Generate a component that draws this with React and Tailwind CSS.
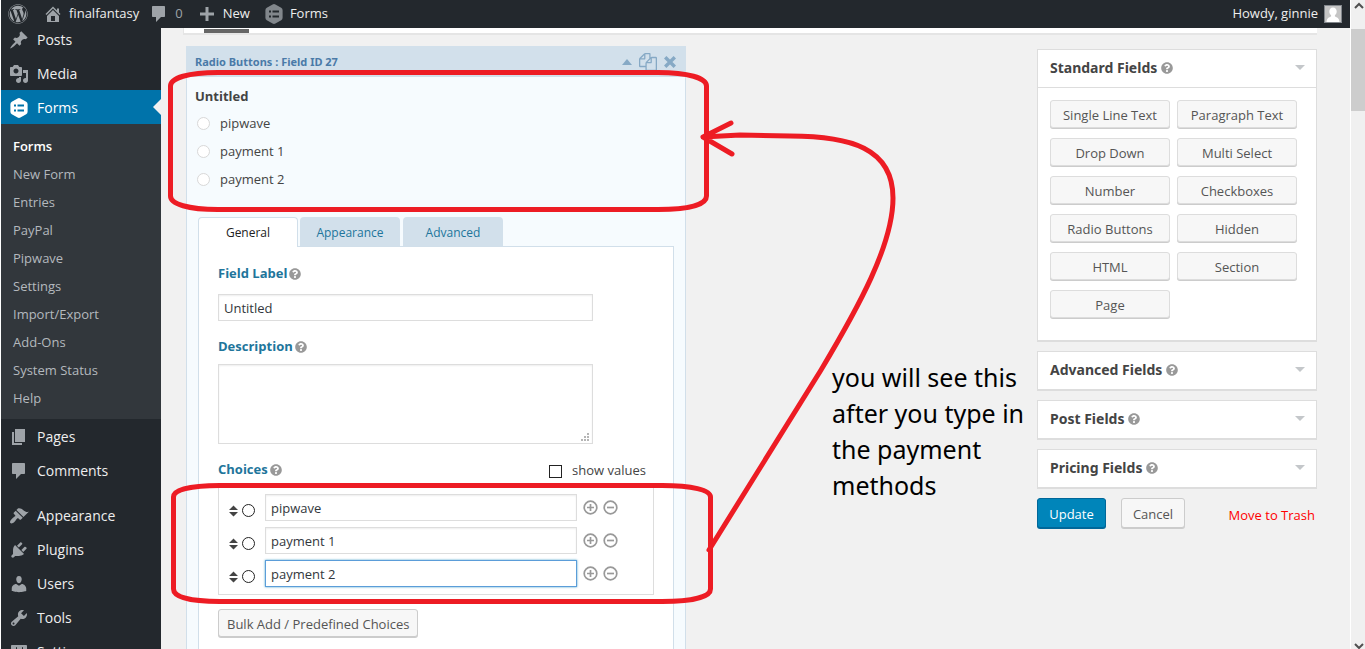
import { FaWordpress, FaQuestionCircle } from "react-icons/fa";

const PATHS = {
  post: "M10.44 3.02l1.82-1.82 6.36 6.35-1.83 1.82c-1.05-.68-2.48-.57-3.41.36l-.75.75c-.92.93-1.04 2.35-.35 3.41l-1.83 1.82-2.41-2.41-2.8 2.79c-.42.42-3.38 2.71-3.8 2.29s1.86-3.39 2.28-3.81l2.79-2.79L4.1 9.36l1.83-1.82c1.05.69 2.48.57 3.4-.36l.75-.75c.93-.92 1.05-2.35.36-3.41z",
  media: "M13 11V4c0-.55-.45-1-1-1h-1.67L9 1H5L3.67 3H2c-.55 0-1 .45-1 1v7c0 .55.45 1 1 1h10c.55 0 1-.45 1-1zM7 4.5c1.38 0 2.5 1.12 2.5 2.5S8.38 9.5 7 9.5 4.5 8.38 4.5 7 5.62 4.5 7 4.5zM14 6h5v10.5c0 1.38-1.12 2.5-2.5 2.5S14 17.88 14 16.5s1.12-2.5 2.5-2.5c.17 0 .34.02.5.05V9h-3V6zm-4 8.05V13h2v3.5c0 1.38-1.12 2.5-2.5 2.5S7 17.88 7 16.5 8.12 14 9.5 14c.17 0 .34.02.5.05z",
  page: "M6 15V2h10v13H6zm-1 1h8v2H3V5h2v11z",
  comments: "M4 2h11c.6 0 1 .4 1 1v9c0 .6-.4 1-1 1h-3l-5 5v-5H4c-.6 0-1-.4-1-1V3c0-.6.4-1 1-1z",
  appearance: "M14.48 11.06L7.41 3.99l1.5-1.5c.5-.56 2.3-.47 3.51.32 1.21.8 1.43 1.28 2.91 2.1 1.18.64 2.45 1.26 4.45.85zm-.71.71L6.7 4.7 4.93 6.47c-.39.39-.39 1.02 0 1.41l1.06 1.06c.39.39.39 1.03 0 1.42-.6.6-1.43 1.11-2.21 1.69-.35.26-.7.53-1.01.84C1.43 14.23.4 16.08 1.4 17.07c.99 1 2.84-.03 4.18-1.36.31-.31.58-.66.85-1.02.57-.78 1.08-1.61 1.69-2.21.39-.39 1.02-.39 1.41 0l1.06 1.06c.39.39 1.02.39 1.41 0z",
  plugins: "M13.11 4.36L9.87 7.6 8 5.73l3.24-3.24c.35-.34 1.05-.2 1.56.32.52.51.66 1.21.31 1.55zm-8 1.77l.91-1.12 9.01 9.01-1.19.84c-.71.71-2.63 1.16-3.82 1.16H6.14L4.9 17.26c-.59.59-1.54.59-2.12 0-.59-.58-.59-1.53 0-2.12l1.24-1.24v-3.88c0-1.13.4-3.19 1.09-3.89zm7.26 3.97l3.24-3.24c.34-.35 1.04-.21 1.55.31.52.51.66 1.21.31 1.55l-3.24 3.25z",
  users: "M10 9.25c-2.27 0-2.73-3.44-2.73-3.44C7 4.02 7.82 2 9.97 2c2.16 0 2.98 2.02 2.71 3.81 0 0-.41 3.44-2.68 3.44zm0 2.57L12.72 10c2.39 0 4.52 2.33 4.52 4.53v2.49s-3.65 1.13-7.24 1.13c-3.65 0-7.24-1.13-7.24-1.13v-2.49c0-2.25 1.94-4.48 4.47-4.48z",
  tools: "M16.68 9.77c-1.34 1.34-3.3 1.67-4.95.99l-5.41 6.52c-.99.99-2.59.99-3.58 0s-.99-2.59 0-3.57l6.52-5.42c-.68-1.65-.35-3.61.99-4.95 1.28-1.28 3.12-1.62 4.72-1.06l-2.89 2.89 2.82 2.82 2.86-2.87c.53 1.58.18 3.39-1.08 4.65zM3.81 16.21c.4.39 1.04.39 1.43 0 .4-.4.4-1.04 0-1.43-.39-.4-1.03-.4-1.43 0-.39.39-.39 1.03 0 1.43z",
  settings: "M18 16V4c0-.55-.45-1-1-1H3c-.55 0-1 .45-1 1v12c0 .55.45 1 1 1h14c.55 0 1-.45 1-1zM8 11h1c.55 0 1 .45 1 1s-.45 1-1 1H8v1.5c0 .28-.22.5-.5.5s-.5-.22-.5-.5V13H6c-.55 0-1-.45-1-1s.45-1 1-1h1V5.5c0-.28.22-.5.5-.5s.5.22.5.5V11zm5-2h-1c-.55 0-1-.45-1-1s.45-1 1-1h1V5.5c0-.28.22-.5.5-.5s.5.22.5.5V7h1c.55 0 1 .45 1 1s-.45 1-1 1h-1v5.5c0 .28-.22.5-.5.5s-.5-.22-.5-.5V9z",
  home: "M16 8.5l1.53 1.53-1.06 1.06L10 4.6l-6.47 6.49-1.06-1.06L10 2.5l4 4v-2h2v4zm-6-2.46l6 5.99V18H4v-5.97zM12 17v-5H8v5h4z",
  plus: "M8.5 3h3v5.5H17v3h-5.5V17h-3v-5.5H3v-3h5.5z",
  forms: "M8.6.5q1.4-.8 2.8 0l5.8 3.3q1.4.8 1.4 2.4v7.6q0 1.6-1.4 2.4l-5.8 3.3q-1.4.8-2.8 0l-5.8-3.3q-1.4-.8-1.4-2.4V6.2q0-1.6 1.4-2.4zM5 6.5v2h2v-2zm3.5 0v2H15v-2zM5 11.5v2h2v-2zm3.5 0v2H15v-2z",
};

function Icon({ name, className = "" }) {
  return (
    <svg viewBox="0 0 20 20" className={`size-5 shrink-0 fill-current ${className}`} aria-hidden="true">
      <path fillRule="evenodd" d={PATHS[name]} />
    </svg>
  );
}

function Help() {
  return <FaQuestionCircle className="size-3 shrink-0 text-[#999]" aria-hidden="true" />;
}

function MenuItem({ icon, label, current }) {
  return (
    <li className={`relative ${current ? "bg-[#0073aa] text-white" : "text-[#eee]"}`}>
      <a href="#" className="flex h-[34px] items-center gap-2 pt-0.5 pl-2 text-sm">
        <Icon name={icon} className={current ? "text-white" : "text-[#9ea3a8]"} />
        {label}
      </a>
      {current && (
        <span className="absolute top-[9px] right-0 border-8 border-transparent border-r-[#f1f1f1]" />
      )}
    </li>
  );
}

const SUBMENU = ["New Form", "Entries", "PayPal", "Pipwave", "Settings", "Import/Export", "Add-Ons", "System Status", "Help"];

function Sidebar() {
  return (
    <nav className="w-40 shrink-0 overflow-hidden bg-[#23282d]" aria-label="Admin menu">
      <ul className="-mt-1.5">
        <MenuItem icon="post" label="Posts" />
        <MenuItem icon="media" label="Media" />
        <MenuItem icon="forms" label="Forms" current />
        <li>
          <ul className="bg-[#32373c] pt-2 pb-[7px] text-[13px] leading-7 text-[#b4b9be]">
            <li><a href="#" className="block pl-3 font-semibold text-white">Forms</a></li>
            {SUBMENU.map((s) => (
              <li key={s}><a href="#" className="block pl-3">{s}</a></li>
            ))}
          </ul>
        </li>
        <MenuItem icon="page" label="Pages" />
        <MenuItem icon="comments" label="Comments" />
        <li className="h-[11px]" aria-hidden="true" />
        <MenuItem icon="appearance" label="Appearance" />
        <MenuItem icon="plugins" label="Plugins" />
        <MenuItem icon="users" label="Users" />
        <MenuItem icon="tools" label="Tools" />
        <MenuItem icon="settings" label="Settings" />
      </ul>
    </nav>
  );
}

function AdminBar() {
  return (
    <header className="flex h-7 shrink-0 items-center bg-[#23282d] pr-2 pl-[7px] text-[13px] text-[#eee]">
      <a href="#" aria-label="WordPress" className="mr-[15px]"><FaWordpress className="size-5 text-[#9ea3a8]" /></a>
      <a href="#" className="mr-2.5 flex items-center gap-1.5">
        <Icon name="home" className="text-[#9ea3a8]" />finalfantasy
      </a>
      <a href="#" className="mr-3.5 flex items-center gap-1.5 text-[#9ea3a8]"><Icon name="comments" />0</a>
      <a href="#" className="mr-3.5 flex items-center gap-1.5">
        <Icon name="plus" className="text-[#9ea3a8]" />New
      </a>
      <a href="#" className="flex items-center gap-1.5"><Icon name="forms" className="text-[#82878c]" />Forms</a>
      <a href="#" className="ml-auto flex items-center gap-1.5">
        Howdy, ginnie
        <svg viewBox="0 0 18 18" className="size-[18px]" aria-hidden="true">
          <rect width="18" height="18" fill="#82878c" />
          <rect x="1" y="1" width="16" height="16" fill="#c5c5c5" />
          <path fill="#fff" d="M9 2.5c2.4 0 3.7 1.8 3.7 4 0 1.6-.8 3-1.8 3.7v1.3c2 .8 4.3 1.5 4.6 5.5h-13c.3-4 2.6-4.7 4.6-5.5v-1.3c-1-.7-1.8-2.1-1.8-3.7 0-2.2 1.3-4 3.7-4z" />
        </svg>
      </a>
    </header>
  );
}

const FIELD = "border bg-white px-[5px] text-[13px] text-[#32373c] outline-none";
const FIELD_IDLE = "border-[#ddd] shadow-[inset_0_1px_2px_rgba(0,0,0,0.07)]";
const FIELD_FOCUS = "border-[#5b9dd9] shadow-[0_0_2px_rgba(30,140,190,0.8)]";
const BUTTON = "rounded-[3px] border border-[#ccc] bg-[#f7f7f7] text-[13px] text-[#555] shadow-[0_1px_0_#ccc]";

function FieldPreview() {
  return (
    <div role="radiogroup" aria-labelledby="preview-title" className="h-[140px] px-2 pt-[9px]">
      <p id="preview-title" className="text-[13px] leading-5 font-bold text-[#444]">Untitled</p>
      <div className="pt-1">
        {["pipwave", "payment 1", "payment 2"].map((o) => (
          <label key={o} className="flex h-7 items-center gap-2.5 pl-0.5 text-[13px] text-[#444]">
            <input type="radio" name="preview" className="mb-0.5 size-[13px] appearance-none rounded-full border border-[#d8d8d8] bg-white" />
            {o}
          </label>
        ))}
      </div>
    </div>
  );
}

function Choice({ value, focused }) {
  return (
    <li className="flex h-[27px] items-center">
      <svg viewBox="0 0 9 12" className="mt-1.5 h-3 w-[9px] fill-[#444]" aria-hidden="true">
        <path d="M4.5 0.5L9 5H0zM0 7h9l-4.5 4.5z" />
      </svg>
      <input type="radio" name="default-choice" aria-label={`Default ${value}`} className="mt-1.5 ml-1 size-[13px] appearance-none rounded-full border border-[#222] bg-white" />
      <input
        type="text"
        aria-label="Choice label"
        defaultValue={value}
        className={`${FIELD} ml-2.5 h-[27px] w-[312px] ${focused ? FIELD_FOCUS : FIELD_IDLE}`}
      />
      <div className="ml-1.5 flex gap-[5px]">
        {[["Add choice", "M7.5 4v7M4 7.5h7"], ["Remove choice", "M4 7.5h7"]].map(([label, d]) => (
          <button key={label} type="button" aria-label={label}>
            <svg viewBox="0 0 15 15" className="size-[15px] fill-none stroke-[#999]" strokeWidth="1.7">
              <circle cx="7.5" cy="7.5" r="6.3" />
              <path d={d} />
            </svg>
          </button>
        ))}
      </div>
    </li>
  );
}

const LABEL = "flex h-5 items-center gap-0.5 pt-0.5 text-[13px] font-bold text-[#21759b]";
const TAB = "h-[29px] w-[100px] rounded-t bg-[#d2e0eb] pt-0.5 text-[#21759b]";

function FieldEditor() {
  return (
    <section className="w-[500px] shrink-0">
      <div className="flex h-[31px] items-center gap-[7px] border-b border-[#d1dfea] bg-[#d2e0eb] pt-0.5 pr-2.5 pl-[9px] text-[#86a9c5]">
        <h2 className="flex-1 font-['Noto_Sans',sans-serif] text-[11px] font-bold text-[#4a7aa8]">Radio Buttons : Field ID 27</h2>
        <button type="button" aria-label="Collapse"><svg viewBox="0 0 10 6" className="h-1.5 w-2.5 fill-current"><path d="M5 0l5 6H0z" /></svg></button>
        <button type="button" aria-label="Duplicate">
          <svg viewBox="0 0 1792 1792" className="size-[18px] fill-current">
            <path d="M1696 384q40 0 68 28t28 68v1216q0 40-28 68t-68 28h-960q-40 0-68-28t-28-68v-288h-544q-40 0-68-28t-28-68v-672q0-40 20-88t48-76l408-408q28-28 76-48t88-20h416q40 0 68 28t28 68v328q68-40 128-40h416zm-544 213l-299 299h299v-299zm-640-384l-299 299h299v-299zm196 647l316-316v-416h-384v416q0 40-28 68t-68 28h-416v640h512v-256q0-40 20-88t48-76zm956 804v-1152h-384v416q0 40-28 68t-68 28h-416v640h896z" />
          </svg>
        </button>
        <button type="button" aria-label="Delete">
          <svg viewBox="0 0 12 12" className="size-3 fill-none stroke-current" strokeWidth="3.4"><path d="M1.2 1.2l9.6 9.6M10.8 1.2l-9.6 9.6" /></svg>
        </button>
      </div>
      <div className="border-x border-[#d1dfea] bg-[#f6fbfe]">
        <FieldPreview />
        <div className="px-[11px]">
          <div className="flex gap-[3px] text-xs" role="tablist">
            <button type="button" role="tab" aria-selected="true" className="-mr-px -mb-px h-[30px] w-[100px] rounded-t border border-b-0 border-[#d1dfea] bg-white text-[#222]">General</button>
            <button type="button" role="tab" aria-selected="false" className={TAB}>Appearance</button>
            <button type="button" role="tab" aria-selected="false" className={TAB}>Advanced</button>
          </div>
          <div className="border border-[#d1dfea] bg-white px-[19px] pt-4 pb-10">
            <label htmlFor="field-label" className={LABEL}>Field Label <Help /></label>
            <input id="field-label" type="text" defaultValue="Untitled" className={`${FIELD} ${FIELD_IDLE} mt-[11px] block h-[27px] w-[375px]`} />
            <label htmlFor="description" className={`${LABEL} mt-[15px]`}>Description <Help /></label>
            <div className="relative mt-2 w-[375px]">
              <textarea id="description" className={`${FIELD} ${FIELD_IDLE} block h-20 w-full resize-none`} />
              <svg viewBox="0 0 8 8" className="absolute right-1 bottom-[3px] size-2 fill-[#b5b5b5]" aria-hidden="true">
                <path d="M6 0h2v2H6zM3 3h2v2H3zM6 3h2v2H6zM0 6h2v2H0zM3 6h2v2H3zM6 6h2v2H6z" />
              </svg>
            </div>
            <div className="mt-[15px] flex h-5 items-center justify-between pr-2">
              <span className={LABEL}>Choices <Help /></span>
              <label className="flex items-center gap-2.5 pt-1 text-[13px] text-[#444]">
                <input type="checkbox" className="size-[13px] appearance-none border border-[#222] bg-white" />
                show values
              </label>
            </div>
            <ul className="mt-2 flex w-[436px] flex-col gap-1.5 border border-[#ddd] px-2.5 pt-1.5 pb-[7px]">
              <Choice value="pipwave" />
              <Choice value="payment 1" />
              <Choice value="payment 2" focused />
            </ul>
            <button type="button" className={`${BUTTON} mt-3.5 h-7 px-2 pt-1`}>Bulk Add / Predefined Choices</button>
          </div>
        </div>
      </div>
    </section>
  );
}

const STANDARD = ["Single Line Text", "Paragraph Text", "Drop Down", "Multi Select", "Number", "Checkboxes", "Radio Buttons", "Hidden", "HTML", "Section", "Page"];

function Panel({ title, children }) {
  return (
    <section className="border border-b-2 border-[#ddd] bg-white">
      <div className="flex h-[37px] items-center gap-1 pr-[11px] pb-0.5 pl-3">
        <h3 className="font-['Noto_Sans',sans-serif] text-sm font-bold text-[#444]">{title}</h3>
        <Help />
        <button type="button" aria-label={`Toggle ${title}`} className="ml-auto">
          <svg viewBox="0 0 10 5" className="h-[5px] w-2.5 fill-[#c4c7ca]"><path d="M0 0h10L5 5z" /></svg>
        </button>
      </div>
      {children}
    </section>
  );
}

function FieldPanels() {
  return (
    <aside className="mt-[3px] flex w-[280px] shrink-0 flex-col gap-[9px]">
      <Panel title="Standard Fields">
        <div className="grid grid-cols-2 gap-x-[7px] gap-y-[10px] border-t border-[#ddd] pt-3 pr-[19px] pb-[22px] pl-3">
          {STANDARD.map((f) => (
            <button key={f} type="button" className="h-7 rounded-[3px] border border-[#ddd] bg-[#f7f7f7] pt-1 text-[13px] text-[#555] shadow-[0_1px_0_#ccc]">{f}</button>
          ))}
        </div>
      </Panel>
      <Panel title="Advanced Fields" />
      <Panel title="Post Fields" />
      <Panel title="Pricing Fields" />
      <div className="flex items-center pr-0.5">
        <button type="button" className="h-[30px] w-[69px] rounded-[3px] border border-[#006799] bg-[#0085ba] pt-1 text-[13px] text-white shadow-[0_1px_0_#006799]">Update</button>
        <button type="button" className={`${BUTTON} ml-[15px] h-[30px] w-16 pt-1`}>Cancel</button>
        <a href="#" className="ml-auto pt-1.5 text-[13px] text-[#f00]">Move to Trash</a>
      </div>
    </aside>
  );
}

function PageScrollbar() {
  return (
    <div className="flex w-[15px] shrink-0 flex-col items-center border-l border-white bg-[#f0f0f0]" aria-hidden="true">
      <svg viewBox="0 0 14 29" className="h-[29px] w-3.5 fill-none stroke-[#505050]" strokeWidth="2"><path d="M4 8l4-4 4 4" /></svg>
      <div className="h-[82px] w-full bg-[#cdcdcd]" />
      <svg viewBox="0 0 14 10" className="mt-auto h-2.5 w-3.5 fill-none stroke-[#505050]" strokeWidth="2"><path d="M4 5l4 4 4-4" /></svg>
    </div>
  );
}

function Annotations() {
  return (
    <div className="pointer-events-none absolute inset-0">
      <svg viewBox="0 0 1365 649" className="h-[649px] w-[1365px] fill-none stroke-[#ed1c24]" strokeWidth="5" strokeLinecap="round" strokeLinejoin="round" aria-hidden="true">
        <path d="M218 72.5H658C688 72.5 706.5 78 706.5 86V196C706.5 205 688 209.5 658 209.5H218C188 209.5 170.5 204 170.5 196V86C170.5 78 188 72.5 218 72.5Z" />
        <path d="M220 485.5H662C692 485.5 710.5 490 710.5 497V589C710.5 597 692 601.5 662 601.5H220C190 601.5 173.5 597 173.5 589V497C173.5 490 190 485.5 220 485.5Z" />
        <path d="M709 550L821 370C858 308 893 245 893 198C893 148 850 136 790 136L740 135L703 137M731 123L703 137L732 154" />
      </svg>
      <p className="absolute top-[359px] left-[832px] w-[200px] font-['Noto_Sans',sans-serif] text-[25px] leading-9 text-black">
        you will see this<br />after you type in<br />the payment<br />methods
      </p>
    </div>
  );
}

export default function App() {
  return (
    <div className="relative flex h-screen overflow-hidden bg-white pl-px font-['Open_Sans','Noto_Sans',sans-serif]">
      <div className="flex min-w-0 flex-1 flex-col">
        <AdminBar />
        <div className="flex min-h-0 flex-1">
          <Sidebar />
          <main className="min-w-0 flex-1 overflow-hidden bg-[#f1f1f1] pr-[33px] pl-[22px]">
            <div className="h-[7px] border-b-2 border-l border-[#e5e5e5] bg-white pl-5">
              <div className="h-[5px] w-[45px] border-t border-white bg-[#666]" />
            </div>
            <div className="mt-[11px] flex items-start justify-between pl-[3px]">
              <FieldEditor />
              <FieldPanels />
            </div>
          </main>
        </div>
      </div>
      <PageScrollbar />
      <Annotations />
    </div>
  );
}
